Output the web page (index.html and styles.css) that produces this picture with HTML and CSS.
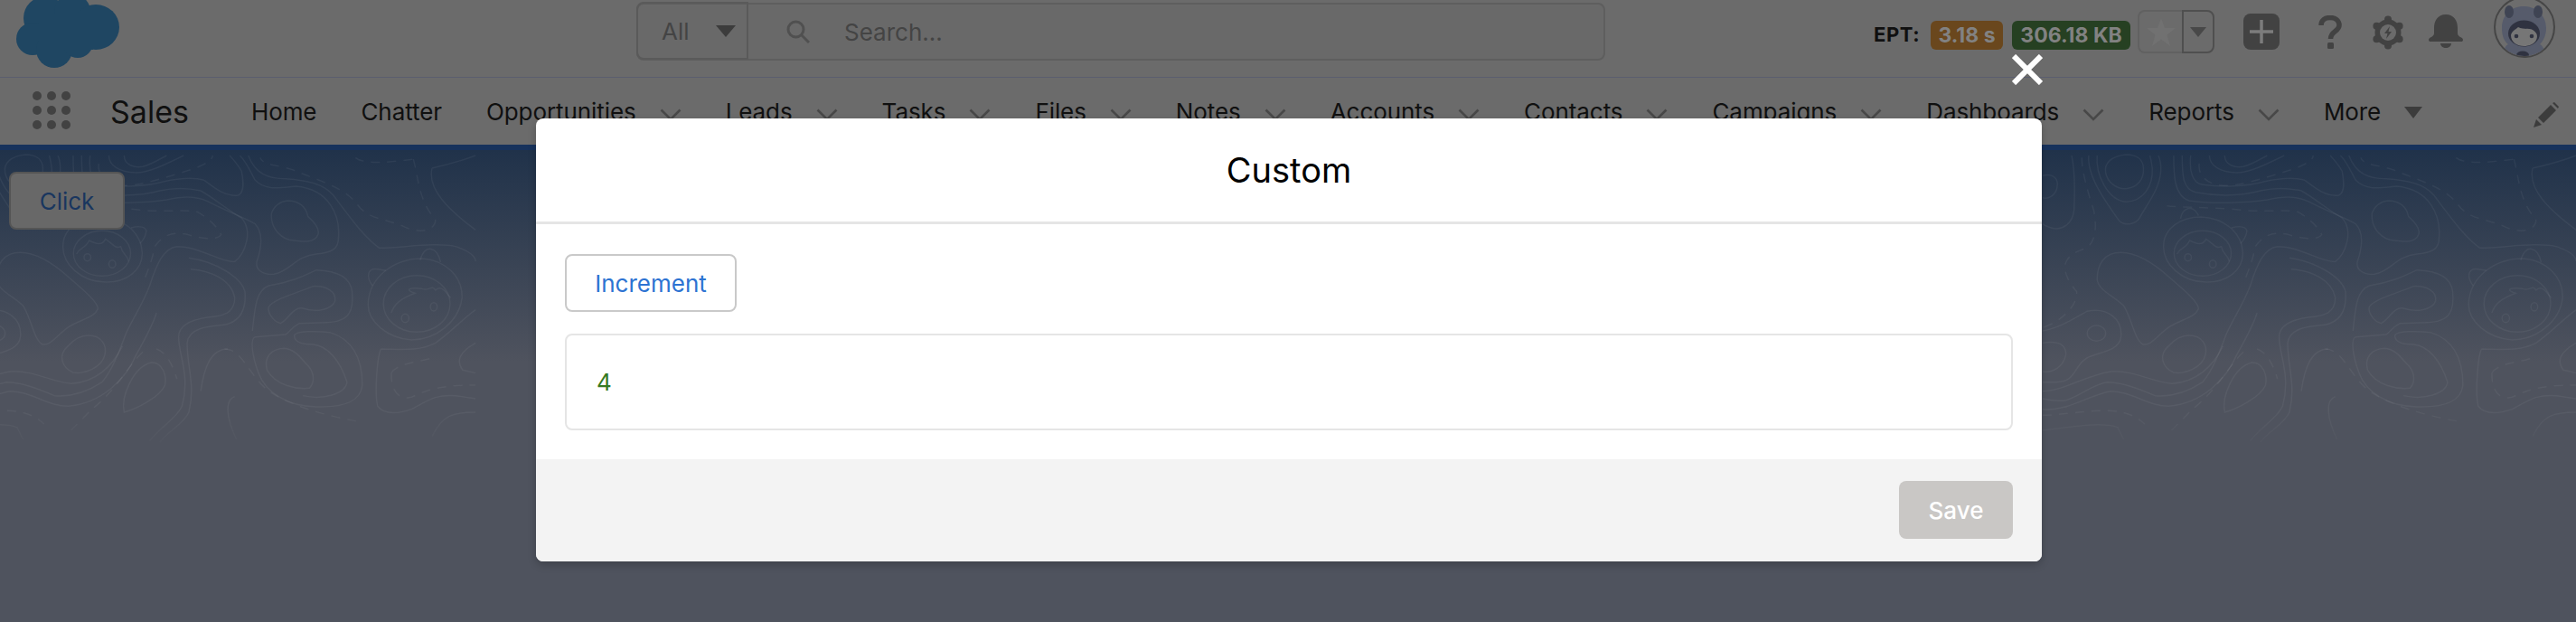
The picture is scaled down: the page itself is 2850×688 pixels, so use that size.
FILE: index.html
```html
<!DOCTYPE html>
<html lang="en">

<head>
    <meta charset="UTF-8">
    <title>Sales</title>
    <link rel="stylesheet" href="styles.css">
</head>

<body>
    <svg class="defs">
        <symbol id="chev" viewBox="0 0 24 14">
            <path d="M1.5 1.5 L12 12 L22.5 1.5" fill="none" stroke="#484848" stroke-width="2.6" />
        </symbol>
        <clipPath id="avatar-clip">
            <circle cx="35" cy="35" r="32" />
        </clipPath>
        <g id="contours" class="contours" transform="scale(.3764,.3333)">
            <path d="M245 15C200 20 180 45 185 75C190 105 215 130 245 128C280 125 298 95 296 60C295 35 280 15 245 15" />
            <path d="M160 18C155 80 190 165 245 172C295 170 325 120 322 60C320 40 318 30 315 18" />
            <path d="M135 18C130 90 190 180 225 235C240 250 270 250 285 225C300 190 345 130 347 70C348 50 345 30 340 18" />
            <path d="M0 85C30 75 48 95 42 125C38 150 15 165 0 158" />
            <path d="M85 18C95 70 95 130 92 200C88 245 55 270 25 258C15 255 5 250 0 245" />
            <path class="dash" d="M115 25C115 70 130 130 150 200C160 260 155 300 130 325C100 335 70 350 65 385C65 420 85 450 100 470C100 510 75 545 30 575L0 590" />
            <path d="M230 340C280 340 330 380 370 420C410 460 455 500 458 525C450 555 410 560 375 585C340 610 320 650 295 645C270 630 265 570 240 520C220 490 165 470 160 430C160 380 180 340 230 340Z" />
            <path d="M465 222C530 225 585 270 588 340C590 400 540 440 480 438C410 438 355 380 355 320C355 260 405 222 465 222Z" />
            <path d="M405 228C410 195 440 175 458 218M555 258C580 250 600 255 600 270C598 285 590 300 582 310" />
            <ellipse cx="470" cy="343" rx="84" ry="75" />
            <path d="M395 345C405 320 420 330 432 300C450 310 470 320 480 295C500 310 510 330 525 320C530 350 545 345 548 370" />
            <ellipse cx="427" cy="356" rx="10" ry="12" />
            <ellipse cx="500" cy="378" rx="10" ry="13" />
            <path d="M385 18C385 80 385 150 430 168C500 180 600 175 660 165C700 155 740 150 780 170C830 200 880 220 920 245C945 275 940 320 925 370C920 400 945 415 975 412C1020 405 1040 350 1100 345C1150 340 1165 325 1165 290C1170 220 1140 130 1040 120C990 125 950 135 920 100C905 70 895 40 875 18" />
            <path d="M410 18C410 80 410 130 450 140C520 155 590 150 640 135C680 125 720 125 760 135C800 160 840 200 880 225C915 270 890 345 860 370C820 375 760 320 690 320C650 325 630 380 610 450C590 510 560 560 540 610C520 670 500 730 470 770C430 800 380 820 330 815C280 790 230 770 190 770C150 775 120 810 70 830C40 835 20 830 0 825" />
            <path d="M435 18C430 70 440 110 470 115C530 125 600 120 650 105C690 95 740 90 770 100C800 125 830 155 870 150C890 140 885 100 880 70C870 50 855 30 845 18" />
            <path d="M490 18C490 50 520 75 570 75C610 75 660 45 710 18M535 18C535 50 565 60 590 55C610 50 640 30 660 18" />
            <path class="dash" d="M460 45C455 90 490 115 530 118C580 120 660 90 730 65C770 50 795 35 795 18" />
            <path class="dash" d="M365 185C400 190 470 190 550 195C650 210 700 195 750 205C790 230 810 260 820 280C810 300 760 295 720 280C680 270 650 280 625 320C620 350 610 390 590 440" />
            <path d="M730 395C790 400 850 430 860 490C860 540 830 550 780 555C720 565 695 590 695 620C695 680 730 750 705 850C690 890 640 920 610 965" />
            <path d="M725 358C800 370 880 420 890 470C895 540 870 570 830 580C780 585 725 590 720 640C720 720 745 780 725 870C710 910 665 930 640 970" />
            <path d="M1015 168C1050 168 1070 190 1075 220C1095 240 1110 260 1105 280C1095 310 1060 305 1020 298C985 285 965 250 968 210C975 185 995 170 1015 168Z" />
            <path d="M1100 398C1150 400 1200 415 1205 470C1210 530 1200 570 1130 572L1050 575C1025 590 1020 605 1010 612L920 620C905 625 910 680 930 740C950 800 1010 850 1100 852C1190 855 1230 830 1235 780C1235 700 1210 630 1140 605C1100 600 1040 600 1035 615C1035 635 1055 645 1090 645C1135 650 1170 700 1190 770C1185 810 1120 830 1060 815" />
            <path d="M1090 452C1130 450 1158 470 1155 500C1145 530 1100 540 1060 525C1030 520 1020 560 995 575C975 570 955 540 960 520C975 495 1030 480 1090 452Z" />
            <path d="M1100 398C1060 420 1020 440 960 450C925 465 920 510 912 600" />
            <path d="M1005 658C1040 660 1060 700 1075 715C1095 740 1095 770 1080 790C1040 795 980 780 955 730C945 690 965 660 1005 658Z" />
            <path d="M1410 360C1480 365 1530 420 1528 490C1520 570 1450 630 1380 630C1310 625 1250 570 1252 510C1255 420 1330 360 1410 360Z" />
            <path d="M1405 365C1420 310 1455 320 1465 372M1265 450C1245 420 1250 390 1280 395L1305 400" />
            <ellipse cx="1395" cy="510" rx="98" ry="94" />
            <path d="M1320 540C1330 510 1345 495 1390 475C1360 465 1370 455 1410 460C1430 470 1440 445 1450 465C1470 445 1480 475 1495 490" />
            <ellipse cx="1361" cy="558" rx="11" ry="14" />
            <ellipse cx="1445" cy="520" rx="10" ry="14" />
            <path d="M1285 325C1350 325 1450 305 1510 320C1560 340 1568 360 1568 370M1285 325C1240 290 1190 210 1150 150C1120 110 1070 100 1010 95C960 95 920 80 900 18" />
            <path d="M1440 60C1500 45 1540 30 1568 18M1440 60C1425 130 1490 200 1568 265" />
            <path class="dash" d="M1385 30C1400 90 1400 170 1450 230C1450 270 1400 280 1350 250C1310 230 1250 230 1220 180C1180 120 1100 100 1030 65C990 50 940 50 935 25M1215 25C1240 50 1320 40 1385 30" />
            <path d="M0 800C60 800 120 750 200 735C270 730 320 770 380 775C450 770 500 720 530 650" />
            <path d="M0 860C70 870 140 810 200 800C260 800 310 850 370 850C470 840 540 760 570 680C590 640 620 580 630 540" />
            <ellipse cx="158" cy="608" rx="27" ry="26" />
            <path d="M0 600C50 590 90 560 130 535C190 520 235 560 230 620C225 670 160 670 130 690C90 715 100 770 40 770L0 770" />
            <path d="M430 615C470 615 485 650 478 680C470 720 420 745 385 738C350 720 340 680 370 650C390 625 410 615 430 615Z" />
            <path d="M615 705C650 705 660 750 655 780C640 820 570 860 535 870C525 820 560 720 615 705Z" />
            <path class="dash" d="M630 660C660 670 680 720 690 760M590 670C550 710 510 800 440 860L370 940" />
            <path d="M0 640C50 630 70 650 68 680C60 720 30 740 0 735" />
            <path class="dash" d="M830 660C880 660 900 740 950 790C1000 840 1120 880 1220 900" />
            <path d="M860 818C830 830 835 890 865 960M840 660C790 660 770 720 760 800" />
            <path d="M1290 660C1280 680 1270 800 1280 850C1300 880 1340 875 1380 860C1430 830 1450 810 1510 815L1568 825M1290 660C1340 660 1400 670 1450 640C1490 610 1530 560 1568 530" />
            <path class="dash" d="M1320 740C1320 800 1340 830 1380 820C1420 800 1450 780 1568 780M1320 740C1340 705 1400 705 1440 690" />
            <path d="M1568 640C1520 670 1510 700 1530 730L1568 740" />
            <path d="M0 930C80 920 170 900 220 920L238 960" />
            <path class="dash" d="M0 880C100 880 230 830 300 910" />
            <path d="M1568 870C1500 870 1470 880 1440 950" />
        </g>
    </svg>

    <header class="top-bar">
        <svg class="logo" viewBox="0 0 115 76">
            <circle cx="32" cy="20" r="24" />
            <circle cx="62" cy="13" r="20" />
            <ellipse cx="88" cy="30" rx="26" ry="25" />
            <circle cx="18" cy="43" r="18" />
            <circle cx="42" cy="55" r="20" />
            <circle cx="68" cy="47" r="17" />
            <rect x="25" y="15" width="60" height="40" />
        </svg>

        <div class="search">
            <div class="search-scope">
                <span>All</span>
                <i class="tri"></i>
            </div>
            <svg class="search-icon" viewBox="0 0 26 26">
                <circle cx="10.5" cy="10.5" r="8.5" fill="none" stroke="#505050" stroke-width="3" />
                <path d="M17 17 L25 25" stroke="#505050" stroke-width="3" />
            </svg>
            <span class="search-text">Search...</span>
        </div>

        <div class="tools">
            <span class="ept">EPT:</span>
            <span class="badge orange">3.18 s</span>
            <span class="badge green">306.18 KB</span>
            <div class="fav">
                <div class="fav-star">
                    <svg width="32" height="31" viewBox="0 0 32 31">
                        <path d="M16 0 L20 11 L32 11 L22.500 18.500 L26 31 L16 23.500 L6 31 L9.500 18.500 L0 11 L12 11 Z" fill="#717171" />
                    </svg>
                </div>
                <div class="fav-more"><i class="tri small"></i></div>
            </div>
            <div class="plus">
                <svg width="28" height="28" viewBox="0 0 28 28">
                    <path d="M14 1 V27 M1 14 H27" stroke="#7c7c7c" stroke-width="3.500" />
                </svg>
            </div>
            <svg class="help" width="26" height="37" viewBox="0 0 26 37">
                <path d="M3 11C3 5 8 2.500 13 2.500C19 2.500 23 6 23 11C23 18 13.500 17 13.500 26" fill="none" stroke="#424242" stroke-width="5.500" />
                <rect x="10" y="30" width="7" height="7" rx="1.500" fill="#424242" />
            </svg>
            <svg class="gear" width="36" height="38" viewBox="0 0 36 38">
                <g fill="#424242">
                    <circle cx="18" cy="4.500" r="4" />
                    <circle cx="18" cy="33.500" r="4" />
                    <circle cx="5.400" cy="11.750" r="4" />
                    <circle cx="30.600" cy="11.750" r="4" />
                    <circle cx="5.400" cy="26.250" r="4" />
                    <circle cx="30.600" cy="26.250" r="4" />
                    <circle cx="18" cy="19" r="14.500" />
                </g>
                <circle cx="18" cy="19" r="9" fill="#6b6b6b" />
                <path d="M20 12 L14 20 L17.500 20 L16 26 L22 18 L18.500 18 Z" fill="#424242" />
            </svg>
            <svg class="bell" width="38" height="37" viewBox="0 0 38 37">
                <path d="M19 0C28 0 32 7 32 15V21C32 25 38 25 38 28C38 29.500 37 30 36 30H2C1 30 0 29.500 0 28C0 25 6 25 6 21V15C6 7 10 0 19 0Z" fill="#424242" />
                <path d="M13 32H25C25 35 22 37 19 37C16 37 13 35 13 32Z" fill="#424242" />
            </svg>
            <svg class="avatar" width="70" height="70" viewBox="0 0 70 70">
                <circle cx="35" cy="35" r="33" fill="#6d6d6d" stroke="#464646" stroke-width="2" />
                <g clip-path="url(#avatar-clip)">
                    <path d="M10 36C10 22 20 12 34 12C48 12 59 22 59 36C59 44 56 50 52 54C56 56 58 62 59 70H10C11 62 13 56 17 54C12 50 10 44 10 36Z" fill="#565b6b" />
                    <ellipse cx="18" cy="18" rx="5" ry="7" fill="#3f4453" />
                    <ellipse cx="50" cy="18" rx="5" ry="7" fill="#3f4453" />
                    <ellipse cx="34.500" cy="42" rx="17.500" ry="14.500" fill="#2f3240" />
                    <path d="M20 44C21 39 25 38 28 35C33 38 40 36 44 38C47 40 49 42 49 45C49 52 42 56 34.500 56C27 56 20 52 20 44Z" fill="#767676" />
                    <circle cx="26" cy="45" r="2.300" fill="#2f3240" />
                    <circle cx="43" cy="45" r="2.300" fill="#2f3240" />
                    <ellipse cx="33" cy="66" rx="7" ry="4.500" fill="#2f3240" />
                </g>
            </svg>
        </div>
    </header>

    <nav class="app-nav">
        <svg class="launcher" width="42" height="42" viewBox="0 0 42 42">
            <g fill="#424242">
                <circle cx="5" cy="5" r="5" />
                <circle cx="21" cy="5" r="5" />
                <circle cx="37" cy="5" r="5" />
                <circle cx="5" cy="21" r="5" />
                <circle cx="21" cy="21" r="5" />
                <circle cx="37" cy="21" r="5" />
                <circle cx="5" cy="37" r="5" />
                <circle cx="21" cy="37" r="5" />
                <circle cx="37" cy="37" r="5" />
            </g>
        </svg>
        <span class="app-name">Sales</span>
        <div class="nav-items">
            <a>Home</a>
            <a>Chatter</a>
            <a>Opportunities<svg class="chev"><use href="#chev" /></svg></a>
            <a>Leads<svg class="chev"><use href="#chev" /></svg></a>
            <a>Tasks<svg class="chev"><use href="#chev" /></svg></a>
            <a>Files<svg class="chev"><use href="#chev" /></svg></a>
            <a>Notes<svg class="chev"><use href="#chev" /></svg></a>
            <a>Accounts<svg class="chev"><use href="#chev" /></svg></a>
            <a>Contacts<svg class="chev"><use href="#chev" /></svg></a>
            <a>Campaigns<svg class="chev"><use href="#chev" /></svg></a>
            <a>Dashboards<svg class="chev"><use href="#chev" /></svg></a>
            <a>Reports<svg class="chev"><use href="#chev" /></svg></a>
            <a>More<i class="tri more"></i></a>
        </div>
        <svg class="edit" width="28" height="28" viewBox="0 0 28 28">
            <path d="M0 28 L3 19 L9 25 Z M5 17 L19 3 L25 9 L11 23 Z M21 1 L23 0 L28 5 L27 7 Z" fill="#3c3c3c" />
        </svg>
    </nav>

    <main class="content">
        <svg class="topo" viewBox="0 0 2850 340">
            <use href="#contours" x="2260" />
            <use href="#contours" x="-64" />
        </svg>
        <button class="click-btn">Click</button>
    </main>

    <button class="close-btn" aria-label="Close">
        <svg width="34" height="34" viewBox="0 0 34 34">
            <path d="M2 2 L32 32 M32 2 L2 32" stroke="#fff" stroke-width="6" />
        </svg>
    </button>

    <section class="modal">
        <h2 class="modal-title">Custom</h2>
        <div class="modal-body">
            <button class="btn-outline">Increment</button>
            <div class="output">4</div>
        </div>
        <div class="modal-footer">
            <button class="btn-save" disabled>Save</button>
        </div>
    </section>
</body>

</html>
```

FILE: styles.css
```css
* {
    box-sizing: border-box;
}

body {
    margin: 0;
    width: 2850px;
    height: 688px;
    overflow: hidden;
    position: relative;
    font-family: Inter, "Noto Sans", sans-serif;
    font-size: 26px;
    background-color: #4f535e;
    color: #101010;
}

.defs {
    position: absolute;
    width: 0;
    height: 0;
}

.tri {
    display: block;
    width: 0;
    height: 0;
    border-left: 11px solid transparent;
    border-right: 11px solid transparent;
    border-top: 13px solid #3c3c3c;
}

.tri.small {
    border-left-width: 9px;
    border-right-width: 9px;
    border-top-width: 11px;
    border-top-color: #484848;
}

.tri.more {
    margin-left: 26px;
    margin-top: 2px;
    border-left-width: 10px;
    border-right-width: 10px;
    border-top-width: 13px;
}

/* top bar */
.top-bar {
    height: 86px;
    display: flex;
    align-items: flex-start;
    background-color: #6b6b6b;
    border-bottom: 1px solid #5a5d6e;
    overflow: hidden;
}

.logo {
    width: 115px;
    height: 76px;
    margin-left: 18px;
    flex-shrink: 0;
    fill: #1f4662;
}

.search {
    width: 1072px;
    height: 64px;
    margin-top: 3px;
    margin-left: 571px;
    display: flex;
    align-items: center;
    background-color: #696969;
    border: 2px solid #5e5e5e;
    border-radius: 8px;
    color: #444;
}

.search-scope {
    width: 124px;
    height: 64px;
    margin: -2px 0 0 -2px;
    padding-left: 26px;
    display: flex;
    align-items: center;
    gap: 29px;
    border: 2px solid #5a5a5a;
    border-radius: 8px 0 0 8px;
}

.search-icon {
    width: 26px;
    height: 26px;
    margin-left: 42px;
}

.search-text {
    margin-left: 38px;
}

.tools {
    margin-left: auto;
    padding-right: 22px;
    display: flex;
    align-items: flex-start;
}

.ept {
    margin-top: 25px;
    font-size: 22px;
    font-weight: 700;
    letter-spacing: .5px;
}

.badge {
    height: 32px;
    margin-top: 23px;
    display: flex;
    align-items: center;
    justify-content: center;
    border-radius: 6px;
    font-size: 23px;
    font-weight: 700;
    color: #828282;
}

.orange {
    width: 80px;
    margin-left: 12px;
    background-color: #6a471d;
}

.green {
    width: 131px;
    margin-left: 10px;
    background-color: #264022;
}

.fav {
    height: 48px;
    margin-top: 11px;
    margin-left: 8px;
    display: flex;
}

.fav-star {
    width: 49px;
    display: flex;
    align-items: center;
    justify-content: center;
    border: 2px solid #616161;
    border-right: none;
    border-radius: 8px 0 0 8px;
}

.fav-more {
    width: 36px;
    display: flex;
    align-items: center;
    justify-content: center;
    border: 2px solid #4f4f4f;
    border-radius: 0 8px 8px 0;
}

.plus {
    width: 40px;
    height: 40px;
    margin-top: 15px;
    margin-left: 32px;
    display: flex;
    align-items: center;
    justify-content: center;
    background-color: #424242;
    border-radius: 8px;
}

.help {
    margin-top: 17px;
    margin-left: 43px;
}

.gear {
    margin-top: 17px;
    margin-left: 33px;
}

.bell {
    margin-top: 16px;
    margin-left: 27px;
}

.avatar {
    margin-top: -5px;
    margin-left: 33px;
}

/* app nav */
.app-nav {
    height: 80px;
    display: flex;
    align-items: center;
    background-color: #6b6b6b;
    border-bottom: 6px solid #17325c;
}

.launcher {
    margin-left: 36px;
    margin-top: -2px;
}

.app-name {
    margin-left: 44px;
    font-size: 34px;
}

.nav-items {
    margin-left: 69px;
    display: flex;
    align-items: center;
    gap: 49px;
    letter-spacing: -.08px;
}

.nav-items a {
    display: flex;
    align-items: center;
}

.chev {
    width: 24px;
    height: 14px;
    margin-left: 26px;
    margin-top: 7px;
}

.edit {
    margin-left: auto;
    margin-right: 19px;
    margin-top: 7px;
}

/* page background */
.content {
    height: 522px;
    position: relative;
    padding: 24px 10px;
    background: linear-gradient(#20324a, #4f535e 234px);
}

.topo {
    position: absolute;
    top: 0;
    left: 0;
    width: 2850px;
    height: 340px;
    -webkit-mask-image: linear-gradient(#000 85%, transparent);
    mask-image: linear-gradient(#000 85%, transparent);
}

.contours path,
.contours ellipse {
    fill: none;
    stroke: #fff;
    stroke-opacity: .05;
    stroke-width: 1.5px;
    vector-effect: non-scaling-stroke;
}

.contours .dash {
    stroke-dasharray: 10 8;
}

.click-btn {
    position: relative;
    width: 128px;
    height: 64px;
    background-color: #686868;
    border: 2px solid #555;
    border-radius: 8px;
    font: inherit;
    color: #19365f;
}

/* modal */
.modal {
    position: absolute;
    top: 131px;
    left: 593px;
    width: 1666px;
    height: 490px;
    display: flex;
    flex-direction: column;
    background-color: #fff;
    border-radius: 8px;
    box-shadow: 0 4px 10px rgba(0, 0, 0, .2);
    overflow: hidden;
}

.modal-title {
    height: 117px;
    margin: 0;
    display: flex;
    align-items: center;
    justify-content: center;
    border-bottom: 3px solid #e5e5e5;
    font-size: 38px;
    font-weight: 400;
    color: #000;
}

.modal-body {
    height: 260px;
    padding: 33px 32px 32px;
}

.btn-outline {
    display: block;
    width: 190px;
    height: 64px;
    background-color: #fff;
    border: 2px solid #c9c9c9;
    border-radius: 8px;
    font: inherit;
    color: #2d73d2;
}

.output {
    height: 107px;
    margin-top: 24px;
    padding-left: 33px;
    display: flex;
    align-items: center;
    border: 2px solid #e5e5e5;
    border-radius: 8px;
    color: #367a22;
}

.modal-footer {
    flex: 1;
    padding: 24px 32px;
    display: flex;
    justify-content: flex-end;
    background-color: #f3f3f3;
}

.btn-save {
    width: 126px;
    height: 64px;
    background-color: #c9c7c5;
    border: none;
    border-radius: 8px;
    font: inherit;
    font-weight: 500;
    color: #fff;
}

.close-btn {
    position: absolute;
    top: 60px;
    left: 2226px;
    width: 34px;
    height: 34px;
    padding: 0;
    display: flex;
    background: none;
    border: none;
}
```
